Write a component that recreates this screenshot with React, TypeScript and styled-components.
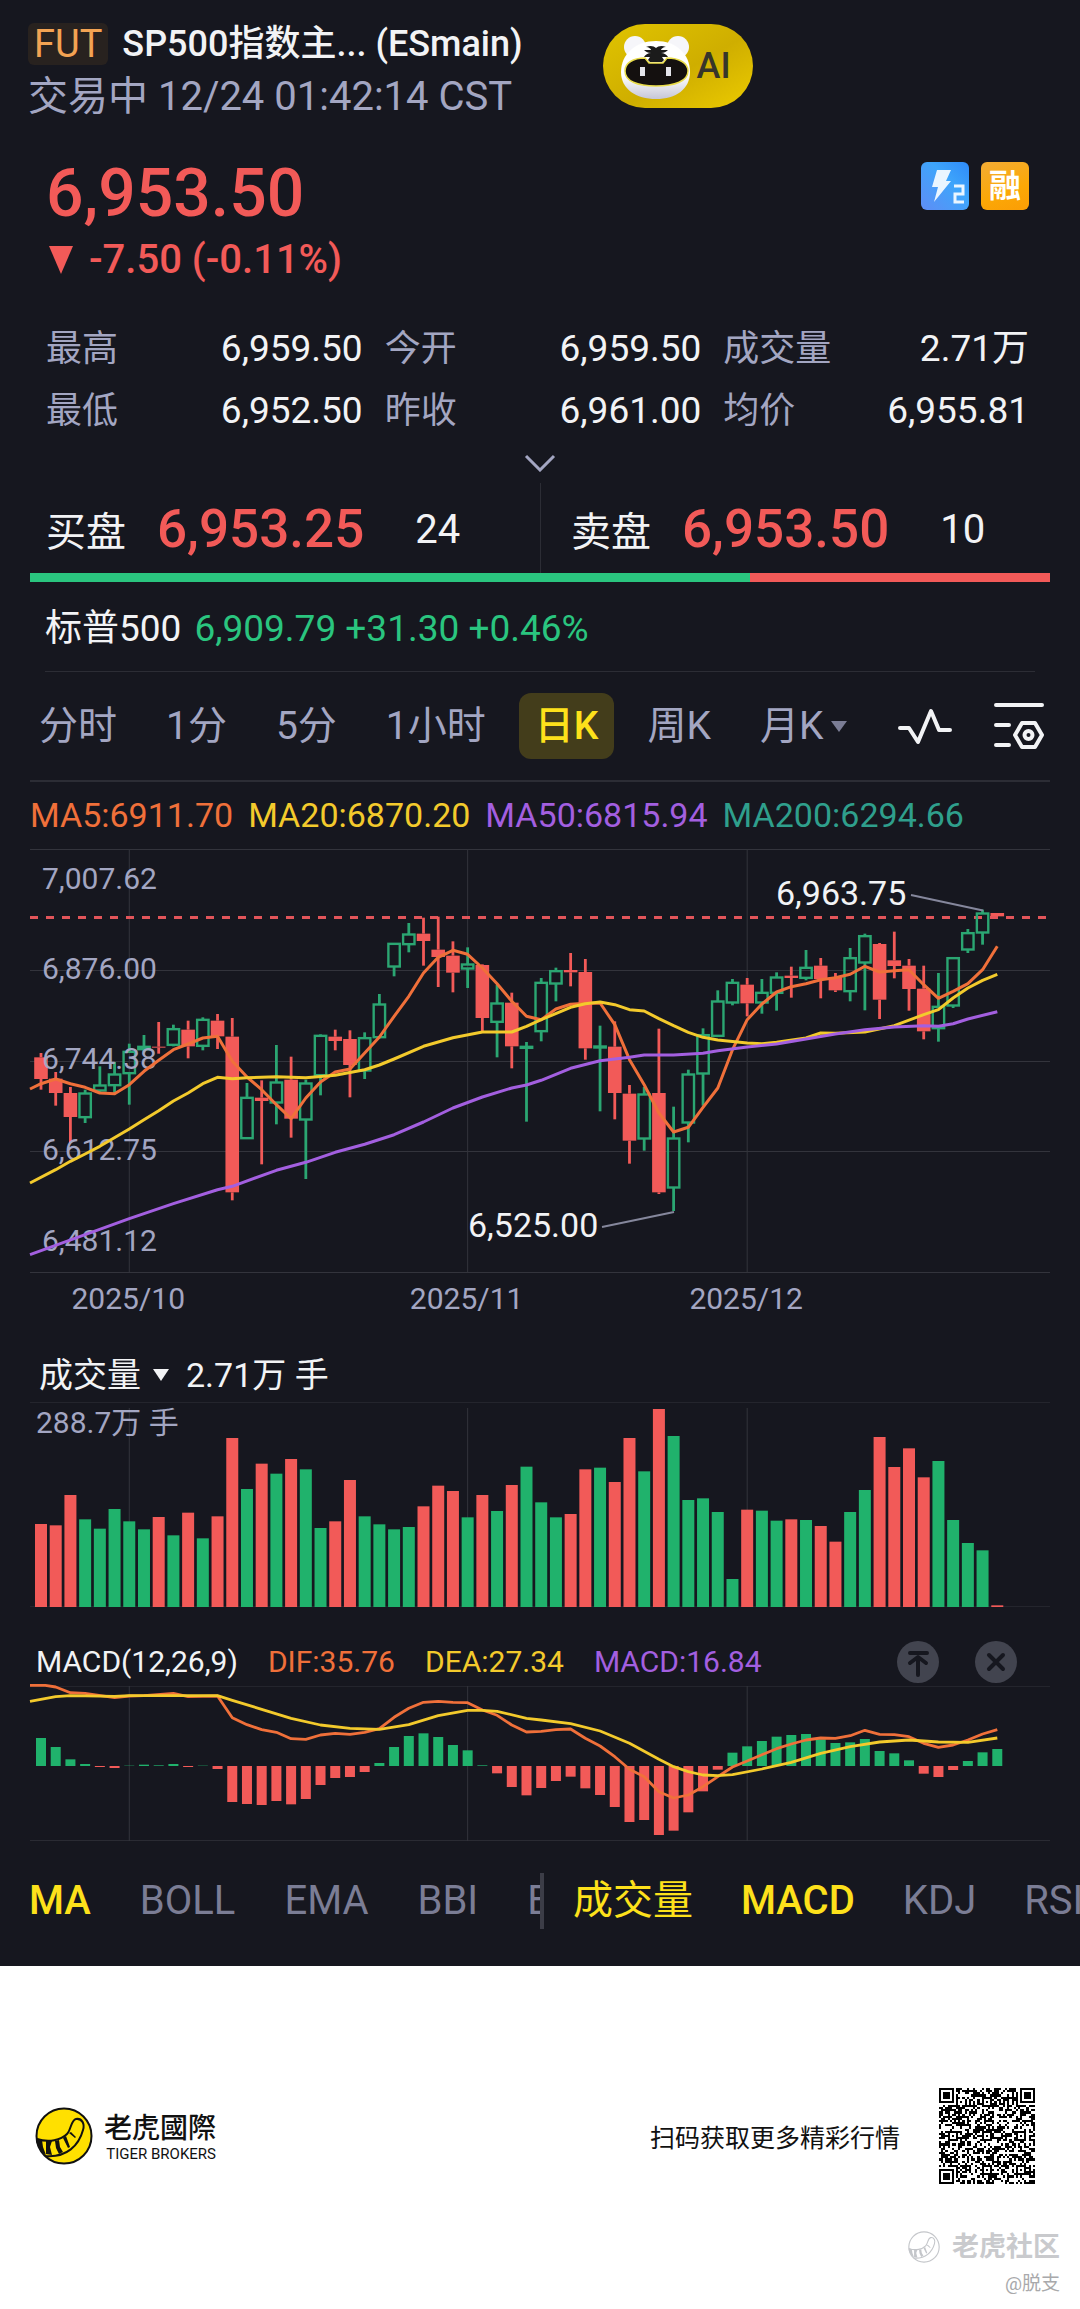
import React from "react";
import styled, { createGlobalStyle } from "styled-components";

const color = {
  bg: "#16171f",
  text: "#f2f3f5",
  muted: "#a3a6c2",
  dim: "#7b7d95",
  line: "#2c2d35",
  grid: "#33343c",
  red: "#f25a58",
  green: "#2ac57f",
  candle: "#2ba672",
  bar: "#20b26c",
  yellow: "#fde11b",
  orange: "#f0703a",
  gold: "#f3ca2c",
  purple: "#a35fe0",
  teal: "#2f9f8c",
};

const GlobalStyle = createGlobalStyle`
  *, *::before, *::after { box-sizing: border-box; }
  body {
    margin: 0;
    background: #fff;
    font-family: Roboto, "Noto Sans CJK SC", sans-serif;
  }
  button {
    margin: 0;
    padding: 0;
    border: 0;
    background: none;
    font: inherit;
    color: inherit;
    cursor: pointer;
  }
  dl, dt, dd, h1, p { margin: 0; font-weight: 400; }
  svg { display: block; }
`;

/* ---------- market data, chart units: three to a pixel ---------- */

type Candle = [dir: "r" | "g", high: number, top: number, bottom: number, low: number];

const candles: Candle[] = [
  ["r", 670, 683, 748, 780], ["r", 727, 747, 790, 828], ["r", 772, 790, 862, 940], ["g", 780, 790, 864, 880],
  ["g", 710, 766, 784, 790], ["g", 697, 733, 768, 795], ["g", 642, 665, 732, 825], ["g", 616, 650, 660, 668],
  ["r", 577, 651, 654, 672], ["g", 585, 597, 647, 650], ["r", 573, 600, 650, 686], ["g", 563, 569, 650, 662],
  ["r", 553, 573, 620, 658], ["r", 565, 621, 1088, 1112], ["g", 760, 803, 927, 928], ["r", 752, 804, 814, 1004],
  ["g", 646, 757, 820, 884], ["r", 681, 750, 867, 924], ["g", 750, 760, 871, 1048], ["g", 614, 617, 738, 797],
  ["r", 600, 621, 634, 662], ["r", 602, 628, 706, 803], ["g", 608, 624, 724, 748], ["g", 493, 523, 624, 626],
  ["g", 340, 341, 412, 440], ["g", 280, 313, 345, 368], ["r", 264, 312, 334, 408], ["r", 261, 360, 382, 472],
  ["r", 335, 378, 429, 488], ["g", 353, 403, 418, 475], ["r", 404, 406, 565, 606], ["g", 466, 520, 578, 683],
  ["r", 489, 519, 650, 716], ["g", 637, 650, 656, 876], ["g", 445, 458, 606, 635], ["g", 414, 423, 463, 515],
  ["r", 370, 421, 428, 470], ["r", 388, 427, 656, 690], ["g", 588, 649, 655, 845], ["r", 575, 651, 790, 869],
  ["r", 766, 792, 933, 1002], ["g", 772, 793, 928, 963], ["r", 597, 790, 1088, 1093], ["g", 831, 925, 1075, 1144],
  ["g", 720, 733, 880, 938], ["g", 596, 615, 733, 828], ["g", 482, 514, 620, 622], ["g", 448, 458, 520, 527],
  ["r", 445, 465, 521, 560], ["g", 448, 488, 520, 552], ["g", 428, 442, 491, 543], ["r", 411, 438, 445, 504],
  ["g", 361, 413, 446, 452], ["r", 385, 408, 448, 506], ["r", 430, 443, 482, 487], ["g", 355, 384, 486, 515],
  ["g", 312, 318, 400, 542], ["r", 340, 343, 510, 568], ["r", 306, 392, 409, 446], ["r", 388, 408, 478, 543],
  ["r", 408, 477, 605, 629], ["g", 430, 530, 597, 636], ["g", 382, 384, 529, 535], ["g", 298, 309, 361, 370],
  ["g", 240, 250, 310, 345], ["r", 250, 250, 260, 260],
];

const volumes = [
  249, 245, 336, 263, 235, 294, 257, 233, 270, 215, 283, 206, 272, 507, 354, 430, 400, 444, 413, 237, 257, 381,
  272, 248, 233, 240, 302, 364, 348, 269, 336, 288, 366, 421, 314, 269, 279, 413, 418, 375, 507, 407, 594, 513,
  321, 326, 285, 84, 292, 289, 259, 263, 261, 243, 196, 285, 351, 510, 420, 476, 389, 438, 261, 192, 170, 5,
];

const histogram = [
  84, 57, 20, 6, -3, -6, 1, 4, 2, 6, -3, 1, -9, -108, -114, -117, -105, -115, -99, -57, -36, -33, -18, 9, 57, 90,
  98, 87, 63, 47, 2, -22, -63, -88, -66, -45, -32, -67, -87, -123, -168, -162, -207, -194, -139, -76, -11, 40, 59,
  75, 88, 93, 96, 80, 69, 71, 81, 45, 38, 17, -23, -33, -12, 15, 41, 51,
];

type Point = [index: number, value: number];

const ma5: Point[] = [
  [-0.75, 778], [0, 762], [1, 748], [2, 762], [3, 773], [4, 790], [5, 792], [6, 765], [7, 725], [8, 692], [9, 660],
  [10, 643], [11, 625], [12, 620], [13, 695], [14, 742], [15, 780], [16, 825], [17, 867], [18, 805], [19, 757],
  [20, 727], [21, 718], [22, 670], [23, 622], [24, 560], [25, 500], [26, 430], [27, 383], [28, 362], [29, 374],
  [30, 415], [31, 462], [32, 515], [33, 560], [34, 570], [35, 538], [36, 524], [37, 521], [38, 520], [39, 585],
  [40, 690], [41, 765], [42, 850], [43, 907], [44, 893], [45, 833], [46, 775], [47, 660], [48, 570], [49, 523],
  [50, 487], [51, 471], [52, 462], [53, 450], [54, 444], [55, 434], [56, 410], [57, 427], [58, 423], [59, 420],
  [60, 465], [61, 506], [62, 485], [63, 462], [64, 420], [65, 350],
];
const ma20: Point[] = [
  [-0.75, 1060], [1, 1020], [2, 995], [3, 973], [4, 950], [6, 898], [7, 870], [8, 843], [9, 814], [10, 790],
  [11, 762], [12, 743], [13, 747], [14, 744], [16, 741], [18, 744], [20, 737], [22, 720], [23, 706], [24, 688],
  [26, 650], [28, 624], [30, 607], [32, 607], [33, 590], [34, 570], [36, 533], [37, 522], [38, 517], [39, 525],
  [40, 540], [41, 544], [42, 567], [43, 588], [44, 608], [45, 623], [46, 631], [48, 640], [49, 642], [50, 638],
  [52, 625], [53, 610], [54, 611], [56, 607], [58, 588], [60, 555], [61, 540], [62, 505], [63, 475], [64, 452],
  [65, 434],
];
const ma50: Point[] = [
  [-0.75, 1275], [6, 1167], [9, 1122], [12, 1080], [13, 1070], [16, 1022], [18, 998], [20, 968], [22, 944],
  [24, 915], [26, 877], [28, 835], [30, 802], [32, 775], [33, 766], [34, 752], [36, 716], [38, 693], [40, 683],
  [41, 676], [43, 676], [45, 671], [46, 663], [48, 652], [50, 643], [52, 628], [54, 613], [56, 600], [58, 592],
  [60, 588], [61, 590], [62, 582], [63, 568], [65, 546],
];
const dif: Point[] = [
  [-0.75, 166], [0.3, 166], [1, 171], [2, 188], [3, 190], [5, 203], [6, 198], [7, 197], [9, 190], [10, 200],
  [12, 198], [13, 263], [14, 284], [15, 299], [16, 307], [17, 326], [18, 328], [19, 315], [20, 310], [21, 313],
  [22, 307], [23, 296], [24, 262], [25, 235], [26, 217], [27, 214], [28, 217], [29, 218], [30, 240], [31, 256],
  [32, 285], [33, 306], [34, 304], [35, 299], [36, 297], [37, 325], [38, 348], [39, 380], [40, 418], [41, 440],
  [42, 485], [43, 504], [44, 495], [45, 470], [46, 440], [47, 411], [48, 393], [49, 374], [50, 356], [51, 342],
  [52, 330], [53, 324], [54, 325], [55, 317], [56, 301], [57, 313], [58, 314], [59, 320], [60, 340], [61, 352],
  [62, 345], [63, 330], [64, 312], [65, 299],
];
const dea: Point[] = [
  [-0.75, 214], [1, 200], [2, 197], [5, 199], [6, 197], [12, 197], [13, 211], [15, 238], [17, 265], [19, 285],
  [21, 295], [23, 298], [25, 284], [27, 257], [29, 241], [30, 241], [31, 244], [33, 265], [34, 270], [36, 281],
  [38, 303], [40, 340], [42, 388], [43, 410], [44, 425], [45, 435], [46, 437], [47, 434], [49, 417], [51, 397],
  [53, 370], [55, 350], [57, 336], [59, 330], [61, 336], [63, 337], [65, 324],
];

const months: { index: number; label: string }[] = [
  { index: 6, label: "2025/10" },
  { index: 29, label: "2025/11" },
  { index: 48, label: "2025/12" },
];

const px = (index: number) => 11 + index * 14.712;
const line = (points: Point[], y: (v: number) => number) =>
  points.map(([i, v]) => `${px(i).toFixed(1)},${y(v).toFixed(1)}`).join(" ");

/* ---------- layout ---------- */

const Screen = styled.main`
  background: ${color.bg};
  color: ${color.text};
  overflow: hidden;
`;

const Header = styled.header`
  display: flex;
  align-items: flex-start;
  gap: 80px;
  padding: 20px 28px 0;
`;

const TitleRow = styled.div`
  display: flex;
  align-items: center;
  gap: 14px;
  height: 49px;
  padding-bottom: 2px;
`;

const FutTag = styled.span`
  padding: 0 6px;
  border-radius: 6px;
  background: #28221f;
  color: #f3a353;
  font-size: 38px;
  line-height: 42px;
`;

const Title = styled.h1`
  font-size: 36px;
  font-weight: 500;
  line-height: 46px;
  white-space: nowrap;
`;

const Status = styled.p`
  color: ${color.muted};
  font-size: 40px;
  line-height: 55px;
  white-space: nowrap;
`;

const AiButton = styled.button`
  display: flex;
  align-items: center;
  gap: 2px;
  flex: none;
  width: 150px;
  height: 84px;
  margin-top: 4px;
  border-radius: 42px;
  background: linear-gradient(150deg, #e0c400, #cfae00 55%, #eccb00);
  color: #37352a;
  font-size: 36px;
  font-weight: 500;
`;

const Quote = styled.section`
  display: flex;
  justify-content: space-between;
  padding: 30px 51px 0 46px;
  color: ${color.red};
`;

const LastPrice = styled.p`
  font-size: 66px;
  font-weight: 500;
  line-height: 80px;
`;

const Change = styled.p`
  display: flex;
  align-items: center;
  gap: 16px;
  padding-left: 3px;
  font-size: 40px;
  font-weight: 500;
  line-height: 52px;
`;

const Badges = styled.div`
  display: flex;
  gap: 12px;
  padding-top: 8px;
`;

const Badge = styled.span<{ $fill: string }>`
  display: flex;
  align-items: center;
  justify-content: center;
  width: 48px;
  height: 48px;
  border-radius: 6px;
  background: ${(p) => p.$fill};
  color: #fff;
  font-size: 32px;
  font-weight: 700;
  line-height: 44px;
`;

const Stats = styled.dl`
  display: grid;
  grid-template-columns: 316fr 316fr 305fr;
  column-gap: 22px;
  padding: 32px 51px 0 46px;
`;

const Stat = styled.div`
  display: flex;
  justify-content: space-between;
  font-size: 37px;
  line-height: 62px;

  dt { color: ${color.muted}; font-size: 36px; }
`;

const Expand = styled.button`
  display: flex;
  align-items: center;
  justify-content: center;
  width: 100%;
  height: 41px;
`;

const Panel = styled.div`
  padding: 0 30px;
`;

const Book = styled.div`
  display: grid;
  grid-template-columns: 1fr 1fr;
`;

const BookSide = styled.div<{ $inset: number }>`
  display: flex;
  align-items: center;
  height: 90px;
  padding-top: 2px;
  padding-left: ${(p) => p.$inset}px;
  font-size: 40px;

  & + & { border-left: 1px solid ${color.line}; }
`;

const BookPrice = styled.span`
  margin: 0 51px 0 31px;
  color: ${color.red};
  font-size: 53px;
  font-weight: 500;
`;

const Ratio = styled.div`
  display: flex;
  height: 9px;
`;

const RatioPart = styled.span<{ $share: number; $fill: string }>`
  flex: ${(p) => p.$share};
  background: ${(p) => p.$fill};
`;

const IndexRow = styled.p`
  display: flex;
  gap: 13px;
  margin: 0 15px;
  padding-top: 4px;
  border-bottom: 1px solid ${color.line};
  font-size: 37px;
  line-height: 85px;
`;

const IndexValue = styled.span`
  color: ${color.green};
`;

const Periods = styled.nav`
  display: flex;
  align-items: center;
  margin: 0 30px;
  height: 110px;
  border-bottom: 2px solid ${color.line};
`;

const PeriodList = styled.div`
  display: flex;
  gap: 17px;
  margin-left: -7px;
`;

const Period = styled.button<{ $active?: boolean }>`
  display: flex;
  align-items: center;
  gap: 8px;
  height: 66px;
  padding: 0 16px;
  border-radius: 12px;
  background: ${(p) => (p.$active ? "#433d1b" : "transparent")};
  color: ${(p) => (p.$active ? color.yellow : color.muted)};
  font-size: 39px;
  font-weight: ${(p) => (p.$active ? 500 : 400)};
  line-height: 66px;
  white-space: nowrap;
`;

const Tools = styled.div`
  display: flex;
  align-items: center;
  gap: 42px;
  margin: 0 6px 0 auto;
`;

const Legend = styled.div`
  display: flex;
  gap: 15px;
  font-size: 34px;
  line-height: 67px;
  white-space: nowrap;
`;

const Tint = styled.span<{ $c: string }>`
  color: ${(p) => p.$c};
`;

const Chart = styled.svg`
  width: 100%;
  height: auto;
  overflow: visible;
  font-size: 30px;
`;

const VolumeHead = styled.div`
  display: flex;
  align-items: center;
  gap: 17px;
  padding-left: 9px;
  font-size: 34px;
  line-height: 54px;
`;

const Picker = styled.button`
  display: flex;
  align-items: center;
  gap: 12px;
`;

const MacdHead = styled.div`
  display: flex;
  align-items: center;
  gap: 30px;
  margin-top: 33px;
  padding: 0 33px 0 6px;
  font-size: 30px;
  line-height: 44px;
  white-space: nowrap;
`;

const RoundButtons = styled.div`
  display: flex;
  gap: 36px;
  margin-left: auto;
`;

const RoundButton = styled.button`
  width: 42px;
  height: 42px;
  border-radius: 50%;
  background: #42444f;
`;

const Indicators = styled.nav`
  display: grid;
  grid-template-columns: 1fr 1fr;
  padding: 32px 0 37px;
`;

const Strip = styled.div<{ $gap: number }>`
  display: flex;
  gap: ${(p) => p.$gap}px;
  padding-left: 29px;
  overflow: hidden;

  & + & { border-left: 4px solid #3c3d47; }
`;

const Indicator = styled.button<{ $active?: boolean; $strong?: boolean }>`
  flex: none;
  color: ${(p) => (p.$active ? color.yellow : color.dim)};
  font-size: 40px;
  font-weight: ${(p) => (p.$strong ? 500 : 400)};
  line-height: 56px;
`;

const Footer = styled.footer`
  padding: 122px 20px 9px 35px;
  background: #fff;
  color: #111;
`;

const FooterRow = styled.div`
  display: flex;
  align-items: center;
  padding-right: 25px;
`;

const BrandText = styled.div`
  margin-left: 11px;
  padding-top: 4px;
  text-align: right;
`;

const BrandName = styled.p`
  font-family: Roboto, "Noto Sans CJK TC", sans-serif;
  font-size: 28px;
  font-weight: 500;
  line-height: 32px;
`;

const BrandSub = styled.p`
  font-size: 15px;
  line-height: 18px;
`;

const ScanText = styled.p`
  margin: 0 39px 0 auto;
  font-size: 25px;
`;

const Watermark = styled.div`
  display: flex;
  align-items: center;
  justify-content: flex-end;
  gap: 12px;
  margin-top: 42px;
  color: #c9cacd;
  font-size: 27px;
  font-weight: 700;
  line-height: 42px;
`;

const Author = styled.p`
  color: #a9a9ab;
  font-size: 19px;
  line-height: 32px;
  text-align: right;
`;

/* ---------- drawings ---------- */

const TigerHead = () => (
  <svg width="92" height="84" viewBox="0 0 92 84" aria-hidden="true">
    <defs>
      <linearGradient id="fur" x1="0" y1="0" x2="0" y2="1">
        <stop offset="0.6" stopColor="#fff" />
        <stop offset="1" stopColor="#c6c6d6" />
      </linearGradient>
    </defs>
    <circle cx="32" cy="23" r="11" fill="#f6f6fa" />
    <circle cx="75" cy="23" r="11" fill="#f6f6fa" />
    <path d="M53 17c20 0 34 13 34 31 0 17-14 27-34 27S18 65 18 48c0-18 15-31 35-31z" fill="url(#fur)" />
    <path
      d="M42 34c-12 0-20 5-20 13 0 10 12 15 31 15s32-5 32-15c0-8-9-13-21-13l-4 5H46z"
      fill="#14100f"
      stroke="#e9dc4a"
      strokeWidth="1.5"
    />
    <path
      d="M43 23c4-2 8-1 10 1 2-2 6-3 10-1-3 0-5 2-5 3h7c-2 2-4 3-7 3 3 0 6 2 7 4h-6l2 3-2 2H47l-2-2 2-3h-6c1-2 4-4 7-4-3 0-5-1-7-3h7c0-1-2-3-5-3z"
      fill="#1b1b1b"
    />
    <rect x="37" y="43" width="5" height="9" fill="#e4e4ea" />
    <rect x="63" y="43" width="5" height="9" fill="#e4e4ea" />
  </svg>
);

const BoltTwo = () => (
  <svg width="48" height="48" viewBox="0 0 48 48" aria-hidden="true">
    <path d="M16 8h14l-5 11h5L13 40l4-15h-6z" fill="#eaf5ff" />
    <path d="M33 24h9v8h-8v8h9" fill="none" stroke="#eaf5ff" strokeWidth="3" />
  </svg>
);

const Triangle = ({ w, h, fill }: { w: number; h: number; fill: string }) => (
  <svg width={w} height={h} viewBox="0 0 10 10" preserveAspectRatio="none" aria-hidden="true">
    <path d="M0 0h10L5 10z" fill={fill} />
  </svg>
);

const TigerTail = ({ size, fill, ink }: { size: number; fill: string; ink: string }) => (
  <svg width={size} height={size} viewBox="0 0 58 58" aria-hidden="true">
    <circle cx="29" cy="29" r="27.5" fill={fill} stroke={ink} strokeWidth="2" />
    <path
      d="M2 32c12 4 24 1 30-5 4-4 4-14 9-15 6-1 9 5 7 11-4 15-16 28-38 26"
      fill="none"
      stroke={ink}
      strokeWidth="2"
    />
    <path
      d="M1 31l6 2 1 7 3 8C5 44 1 38 1 31zM11 34l6 0-2 6 2 8-6-1zM20 34l4-1 1 7 3 5-4 2-3-6zM28 31l3-2 4 11-2 1zM34 26l2-1 5 5-1 1z"
      fill={ink}
    />
  </svg>
);

const QrCode = () => {
  const n = 45;
  const aligns = [6, 22, 38];
  const ring = (dx: number, dy: number) => Math.max(Math.abs(dx), Math.abs(dy));
  let seed = 20251;
  let d = "";
  for (let y = 0; y < n; y++) {
    for (let x = 0; x < n; x++) {
      seed = (seed * 16807) % 2147483647;
      let on = seed / 2147483647 < 0.52;
      if (x === 6 || y === 6) on = (x + y) % 2 === 0;
      for (const ax of aligns)
        for (const ay of aligns) {
          const r = ring(x - ax, y - ay);
          if (r <= 2) on = r !== 1;
        }
      for (const [fx, fy] of [[3, 3], [n - 4, 3], [3, n - 4]]) {
        const r = ring(x - fx, y - fy);
        if (r <= 4) on = r !== 2 && r !== 4;
      }
      if (on) d += `M${x} ${y}h1v1h-1z`;
    }
  }
  return (
    <svg width="96" height="96" viewBox={`0 0 ${n} ${n}`} shapeRendering="crispEdges" role="img" aria-label="QR">
      <path d={d} fill="#000" />
    </svg>
  );
};

const MonthLines = ({ from, to }: { from: number; to: number }) => (
  <>
    {months.map((m) => (
      <line key={m.label} x1={px(m.index)} x2={px(m.index)} y1={from} y2={to} stroke={color.grid} />
    ))}
  </>
);

const priceY = (v: number) => (v - 58) / 3;

const priceLabels: [string, number][] = [
  ["7,007.62", 40],
  ["6,876.00", 130],
  ["6,744.38", 220],
  ["6,612.75", 311],
  ["6,481.12", 402],
];

const PriceChart = () => (
  <Chart viewBox="0 0 1020 499">
    {[0.5, 121.5, 212.5, 302.5, 423.5].map((y) => (
      <line key={y} x1="0" x2="1020" y1={y} y2={y} stroke={color.grid} />
    ))}
    <MonthLines from={0} to={423} />
    <line x1="0" x2="1020" y1="68.5" y2="68.5" stroke="#e2555a" strokeWidth="3" strokeDasharray="8 8" />
    {candles.map(([dir, high, top, bottom, low], i) => {
      const x = px(i);
      const t = priceY(top);
      const b = priceY(bottom);
      const stroke = dir === "r" ? color.red : color.candle;
      return (
        <g key={i} stroke={stroke} strokeWidth="2.8">
          <line x1={x} x2={x} y1={priceY(high)} y2={t} />
          <line x1={x} x2={x} y1={b} y2={priceY(low)} />
          {dir === "r" ? (
            <rect x={x - 6.8} y={t} width="13.6" height={b - t} fill={stroke} stroke="none" />
          ) : (
            <rect x={x - 5.7} y={t + 0.5} width="11.4" height={Math.max(b - t - 1, 1)} fill="none" strokeWidth="2.4" />
          )}
        </g>
      );
    })}
    <g fill={color.muted}>
      {priceLabels.map(([label, y]) => (
        <text key={label} x="12" y={y}>{label}</text>
      ))}
      {months.map((m) => (
        <text key={m.label} x={px(m.index) - 1} y="460" textAnchor="middle">{m.label}</text>
      ))}
    </g>
    <g fill="none" strokeWidth="3" strokeLinejoin="round">
      <polyline points={line(ma5, priceY)} stroke={color.orange} />
      <polyline points={line(ma20, priceY)} stroke={color.gold} />
      <polyline points={line(ma50, priceY)} stroke={color.purple} />
    </g>
    <g stroke="#85879c" strokeWidth="2">
      <line x1="881" y1="46" x2="953" y2="61.5" />
      <line x1="572" y1="378" x2="644" y2="363" />
    </g>
    <g fill={color.text} fontSize="34">
      <text x="746" y="56">6,963.75</text>
      <text x="438" y="388">6,525.00</text>
    </g>
  </Chart>
);

const VolumeChart = () => (
  <Chart viewBox="0 0 1020 205">
    <line x1="0" x2="1020" y1="0.5" y2="0.5" stroke="#24252d" />
    <line x1="0" x2="1020" y1="204.5" y2="204.5" stroke="#24252d" />
    <MonthLines from={6} to={205} />
    {volumes.map((v, i) => (
      <rect
        key={i}
        x={px(i) - 6}
        y={205 - v / 3}
        width="12"
        height={v / 3}
        fill={candles[i][0] === "r" ? color.red : color.bar}
      />
    ))}
    <text x="6" y="31" fill={color.muted}>288.7万 手</text>
  </Chart>
);

const macdY = (v: number) => (v - 162) / 3;

const MacdChart = () => (
  <Chart viewBox="0 0 1020 157">
    <line x1="0" x2="1020" y1="2.5" y2="2.5" stroke="#24252d" />
    <line x1="0" x2="1020" y1="156.5" y2="156.5" stroke="#2a2b33" />
    <MonthLines from={2} to={157} />
    {histogram.map((v, i) => (
      <rect
        key={i}
        x={px(i) - 5}
        y={v > 0 ? 82 - v / 3 : 82}
        width="10"
        height={Math.abs(v) / 3}
        fill={v > 0 ? color.bar : color.red}
      />
    ))}
    <g fill="none" strokeWidth="2.8" strokeLinejoin="round">
      <polyline points={line(dif, macdY)} stroke={color.orange} />
      <polyline points={line(dea, macdY)} stroke={color.gold} />
    </g>
  </Chart>
);

/* ---------- page ---------- */

const stats: [string, string][] = [
  ["最高", "6,959.50"], ["今开", "6,959.50"], ["成交量", "2.71万"],
  ["最低", "6,952.50"], ["昨收", "6,961.00"], ["均价", "6,955.81"],
];

const periods = ["分时", "1分", "5分", "1小时", "日K", "周K", "月K"];

export default function App() {
  return (
    <>
      <GlobalStyle />
      <Screen>
        <Header>
          <div>
            <TitleRow>
              <FutTag>FUT</FutTag>
              <Title>SP500指数主... (ESmain)</Title>
            </TitleRow>
            <Status>交易中 12/24 01:42:14 CST</Status>
          </div>
          <AiButton>
            <TigerHead />
            AI
          </AiButton>
        </Header>

        <Quote>
          <div>
            <LastPrice>6,953.50</LastPrice>
            <Change>
              <Triangle w={24} h={28} fill={color.red} />
              -7.50 (-0.11%)
            </Change>
          </div>
          <Badges>
            <Badge $fill="linear-gradient(45deg, #5f8df5, #3ea5fb 60%, #2f8bfa)"><BoltTwo /></Badge>
            <Badge $fill="linear-gradient(160deg, #f3ac35, #fca806 60%, #fb9d05)">融</Badge>
          </Badges>
        </Quote>

        <Stats>
          {stats.map(([name, value]) => (
            <Stat key={name}>
              <dt>{name}</dt>
              <dd>{value}</dd>
            </Stat>
          ))}
        </Stats>
        <Expand aria-label="展开">
          <svg width="32" height="18" viewBox="0 0 32 18" aria-hidden="true">
            <path d="M2 2l14 14L30 2" fill="none" stroke={color.muted} strokeWidth="3" />
          </svg>
        </Expand>

        <Panel>
          <Book>
            <BookSide $inset={16}>
              买盘<BookPrice>6,953.25</BookPrice>24
            </BookSide>
            <BookSide $inset={30}>
              卖盘<BookPrice>6,953.50</BookPrice>10
            </BookSide>
          </Book>
          <Ratio>
            <RatioPart $share={24} $fill={color.green} />
            <RatioPart $share={10} $fill={color.red} />
          </Ratio>
          <IndexRow>
            <span>标普500</span>
            <IndexValue>6,909.79 +31.30 +0.46%</IndexValue>
          </IndexRow>
        </Panel>

        <Periods>
          <PeriodList>
            {periods.map((p) => (
              <Period key={p} $active={p === "日K"}>
                {p}
                {p === "月K" && <Triangle w={16} h={11} fill={color.dim} />}
              </Period>
            ))}
          </PeriodList>
          <Tools>
            <button aria-label="画线">
              <svg width="54" height="38" viewBox="0 0 54 38" aria-hidden="true">
                <path
                  d="M2 21h9l9 14L33 4l8 19h11"
                  fill="none"
                  stroke={color.text}
                  strokeWidth="4"
                  strokeLinejoin="round"
                  strokeLinecap="round"
                />
              </svg>
            </button>
            <button aria-label="设置">
              <svg width="50" height="48" viewBox="0 0 50 48" aria-hidden="true">
                <g fill="none" stroke={color.text} strokeWidth="4" strokeLinecap="round" strokeLinejoin="round">
                  <path d="M2 3h46M2 23h13M2 43h13" />
                  <path d="M28 21h13l7 12-7 12H28l-7-12z" />
                  <circle cx="34.500" cy="33" r="4" />
                </g>
              </svg>
            </button>
          </Tools>
        </Periods>

        <Panel>
          <Legend>
            <Tint $c={color.orange}>MA5:6911.70</Tint>
            <Tint $c={color.gold}>MA20:6870.20</Tint>
            <Tint $c={color.purple}>MA50:6815.94</Tint>
            <Tint $c={color.teal}>MA200:6294.66</Tint>
          </Legend>
          <PriceChart />
          <VolumeHead>
            <Picker>
              成交量
              <Triangle w={16} h={12} fill={color.text} />
            </Picker>
            <span>2.71万 手</span>
          </VolumeHead>
          <VolumeChart />
          <MacdHead>
            <span>MACD(12,26,9)</span>
            <Tint $c={color.orange}>DIF:35.76</Tint>
            <Tint $c={color.gold}>DEA:27.34</Tint>
            <Tint $c={color.purple}>MACD:16.84</Tint>
            <RoundButtons>
              <RoundButton aria-label="置顶">
                <svg width="42" height="42" viewBox="0 0 42 42" aria-hidden="true">
                  <path
                    d="M13 12h17M21 34V17M13 22l8-6 8 6"
                    fill="none"
                    stroke={color.bg}
                    strokeWidth="4"
                    strokeLinecap="round"
                    strokeLinejoin="round"
                  />
                </svg>
              </RoundButton>
              <RoundButton aria-label="关闭">
                <svg width="42" height="42" viewBox="0 0 42 42" aria-hidden="true">
                  <path d="M14 14l14 14M28 14L14 28" fill="none" stroke={color.bg} strokeWidth="4" strokeLinecap="round" />
                </svg>
              </RoundButton>
            </RoundButtons>
          </MacdHead>
          <MacdChart />
        </Panel>

        <Indicators>
          <Strip $gap={49}>
            <Indicator $active $strong>MA</Indicator>
            <Indicator>BOLL</Indicator>
            <Indicator>EMA</Indicator>
            <Indicator>BBI</Indicator>
            <Indicator>ENE</Indicator>
          </Strip>
          <Strip $gap={48}>
            <Indicator $active>成交量</Indicator>
            <Indicator $active $strong>MACD</Indicator>
            <Indicator>KDJ</Indicator>
            <Indicator>RSI</Indicator>
          </Strip>
        </Indicators>
      </Screen>

      <Footer>
        <FooterRow>
          <TigerTail size={58} fill="#ffe000" ink="#111" />
          <BrandText>
            <BrandName>老虎國際</BrandName>
            <BrandSub>TIGER BROKERS</BrandSub>
          </BrandText>
          <ScanText>扫码获取更多精彩行情</ScanText>
          <QrCode />
        </FooterRow>
        <Watermark>
          <TigerTail size={32} fill="#fff" ink="#c4c6ca" />
          老虎社区
        </Watermark>
        <Author>@脱支</Author>
      </Footer>
    </>
  );
}
